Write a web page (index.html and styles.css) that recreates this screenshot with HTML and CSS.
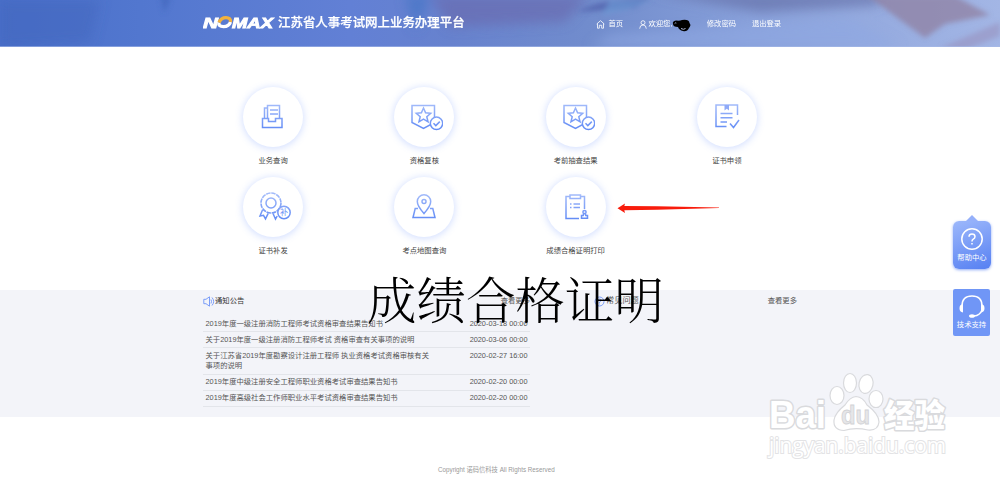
FILE: index.html
```html
<!DOCTYPE html>
<html lang="zh-CN">
<head>
<meta charset="utf-8">
<title>江苏省人事考试网上业务办理平台</title>
<link rel="stylesheet" href="styles.css">
</head>
<body>
<svg class="defs" width="0" height="0"><defs>
<linearGradient id="blue" gradientUnits="userSpaceOnUse" x1="0" y1="2" x2="0" y2="30"><stop offset="0" stop-color="#a3bbfa"/><stop offset="1" stop-color="#5c87f5"/></linearGradient>
<symbol id="badge" viewBox="0 0 34 30"><path d="M3 3.500H25.500V20.500L14.500 26.500L3 20.500Z"/><path d="M14.500 6l2.100 4.800 5.100.5-3.900 3.400 1.200 5.100-4.500-2.700-4.500 2.700 1.200-5.100-3.900-3.400 5.100-.5z"/><circle cx="27.500" cy="21.300" r="6.200" fill="#fff"/><path d="M24.500 21.300l2.300 2.300 4-4"/></symbol>
</defs></svg>
<header class="header">
  <svg class="header-bg" viewBox="0 0 1000 47" preserveAspectRatio="none">
    <defs>
      <linearGradient id="hg"><stop offset="0" stop-color="#496fc9"/><stop offset=".14" stop-color="#5277cf"/><stop offset=".35" stop-color="#6280d5"/><stop offset=".45" stop-color="#6782ce"/><stop offset=".6" stop-color="#728dcd"/><stop offset=".75" stop-color="#88a0da"/><stop offset="1" stop-color="#a3b6e5"/></linearGradient>
      <filter id="soft" x="-20%" y="-50%" width="140%" height="200%"><feGaussianBlur stdDeviation="6"/></filter>
      <filter id="fine" x="-20%" y="-50%" width="140%" height="200%"><feGaussianBlur stdDeviation="2.500"/></filter>
    </defs>
    <rect width="1000" height="47" fill="url(#hg)"/>
    <g filter="url(#soft)"><path d="M0 0H100L90 42 0 47Z" fill="#4066be" opacity=".5"/><path d="M430-5H590L565 22 450 27Z" fill="#686eb2" opacity=".75"/><path d="M405-5h25L416 30z" fill="#4e78c8"/><path d="M650-8H875L880 5 760 12z" fill="#646fa8" opacity=".7"/><path d="M610 35L850 20 900 47H590z" fill="#8fa8e2" opacity=".6"/></g>
    <g filter="url(#fine)"><path d="M160-4h12l-8 17z" fill="#3f65bb" opacity=".6"/><path d="M578 12Q600-2 650-2L635 8z" fill="#5263ac" opacity=".8"/><path d="M610 0h42l-22 9-28 6z" fill="#6c99d4" opacity=".7"/><path d="M868-4H955L990 15 975 18 945 24 925 38Q900 20 868-4z" fill="#8e7d9e" opacity=".7"/><path d="M940 48L1000 22V36L965 50z" fill="#9793bf" opacity=".6"/></g>
    <rect y="46" width="1000" height="1" fill="#a9bbe7" opacity=".6"/>
  </svg>
  <div class="header-inner">
    <div class="logo" aria-label="NOMAX">
      <svg width="72" height="14" viewBox="0 0 72 14"><text x="0" y="12" textLength="15" lengthAdjust="spacingAndGlyphs" class="logo-text">N</text><text x="29" y="12" textLength="41" lengthAdjust="spacingAndGlyphs" class="logo-text">MAX</text><g fill="none" stroke-width="3.300"><path d="M16 6.500Q15 10.600 20.500 10.600Q26 10.600 27.500 6" stroke="#fff"/><path d="M16 6.500Q18 1.700 23 1.700Q28 1.700 27.500 6" stroke="#f2b13c"/></g></svg>
    </div>
    <h1 class="site-title">江苏省人事考试网上业务办理平台</h1>
    <nav class="nav">
      <a class="home"><svg width="9" height="9" viewBox="0 0 9 9"><path d="M.7 4L4.500.7 8.300 4M1.500 3.500V8.200H3.300V5.300H5.700V8.200H7.500V3.500"/></svg>首页</a>
      <a class="user"><svg width="8" height="9" viewBox="0 0 8 9"><circle cx="4" cy="2.700" r="2"/><path d="M.7 8.700Q.8 5 4 5T7.300 8.700"/></svg>欢迎您,<svg class="scribble" width="19" height="13" viewBox="0 0 19 13"><path d="M1 5Q0 2 4 1.500Q8 2 10 1Q17 0 17.500 4L18.500 6Q18 8 17 9Q15 13 11 12Q7 11 6 8Q1 8 1 5Z"/><path class="cut" d="M2.700 4.500q.8-1 1.600-.4M9 9.500q2.500 1.600 4.500 0"/></svg></a>
      <a class="pwd">修改密码</a>
      <a>退出登录</a>
    </nav>
  </div>
</header>

<main class="services">
  <a class="service"><span class="disc"><svg width="34" height="30" viewBox="0 0 34 30"><path d="M8.500 16V3.500H20.500V16M8.500 6H5.500V16M11 8h8M11 12h8" /><path d="M3.500 16.500H9.500V19.500H16.500V16.500H23V25.500H3.500Z"/></svg></span>业务查询</a>
  <a class="service"><span class="disc wide"><svg width="34" height="30"><use href="#badge"/></svg></span>资格复核</a>
  <a class="service"><span class="disc wide"><svg width="34" height="30"><use href="#badge"/></svg></span>考前抽查结果</a>
  <a class="service"><span class="disc"><svg width="34" height="30" viewBox="0 0 34 30"><path d="M13.500 24.500H3V3H24.500V13M7.500 11.500H19.500M7.500 15.700H19.500M7.500 20H14M17 21.500l3.500 4 5.500-7.500"/><path class="solid" d="M11.500 3h4.500v5.500l-2.200-1.700L11.500 8.500z"/></svg></span>证书申领</a>
  <a class="service"><span class="disc wide"><svg width="34" height="30" viewBox="0 0 34 30"><circle cx="13" cy="11" r="10" stroke-width="1.600" stroke-dasharray="4.500 .73"/><circle cx="13" cy="11" r="5"/><path d="M4.500 18L2 24l3.500-.7 2 3.500 2.700-5.500M15 21.500l2.500 5.500 1.700-3"/><circle cx="26" cy="20.500" r="6.200" fill="#fff"/><text class="mini" x="26" y="23.400" text-anchor="middle">补</text></svg></span>证书补发</a>
  <a class="service"><span class="disc"><svg width="34" height="30" viewBox="0 0 34 30"><path d="M14 21.500Q7.300 14 7.300 9.500A6.600 6.600 0 0 1 20.700 9.500Q20.700 14 14 21.500Z"/><circle cx="14" cy="9.500" r="2"/><path d="M8 16.500H5.200L3 25.500H25L22.800 16.500H20"/></svg></span>考点地图查询</a>
  <a class="service"><span class="disc"><svg width="34" height="30" viewBox="0 0 34 30"><path d="M8 4.500H4V26.500H17M18.500 4.500H22.500V17M8 3H18.500V6.500H8zM11.500 12H18M11.500 15.500H18M8 12h1.500M8 15.500h1.500"/><circle cx="22.500" cy="20" r="1.600"/><path d="M21.700 21.500l-.5 2h-1.700v2.700h6v-2.700h-1.700l-.5-2"/></svg></span>成绩合格证明打印</a>
</main>

<section class="info">
  <div class="info-inner">
    <div class="panel notices">
      <div class="panel-head"><svg width="12" height="11" viewBox="0 0 12 11"><path d="M.8 3.300H3L6.500.8V10.200L3 7.700H.8ZM8 3.500Q9 5.500 8 7.500M9 1.500Q12.300 5.500 9 9.500"/></svg><h2>通知公告</h2><a>查看更多</a></div>
      <ul class="list">
        <li><span>2019年度一级注册消防工程师考试资格审查结果告知书</span><time>2020-03-18 00:00</time></li>
        <li><span>关于2019年度一级注册消防工程师考试 资格审查有关事项的说明</span><time>2020-03-06 00:00</time></li>
        <li><span>关于江苏省2019年度勘察设计注册工程师 执业资格考试资格审核有关事项的说明</span><time>2020-02-27 16:00</time></li>
        <li><span>2019年度中级注册安全工程师职业资格考试审查结果告知书</span><time>2020-02-20 00:00</time></li>
        <li><span>2019年度高级社会工作师职业水平考试资格审查结果告知书</span><time>2020-02-20 00:00</time></li>
      </ul>
    </div>
    <div class="panel faq">
      <div class="panel-head"><svg width="11" height="11" viewBox="0 0 11 11"><circle cx="5.500" cy="5.500" r="4.500"/><path d="M4 4.500Q4 3 5.500 3T7 4.500Q7 5.300 5.500 6V6.800M5.500 7.600v.8"/></svg><h2>常见问题</h2><a>查看更多</a></div>
    </div>
  </div>
</section>
<footer class="footer">Copyright 诺码信科技 All Rights Reserved</footer>

<svg class="arrow" width="104" height="12" viewBox="0 0 104 12"><path d="M.5 6.200L8 1.500 7.300 4 40 4.300 102 5.400V6L40 7.800 7.300 8.300 8 11Z"/></svg>
<div class="caption">成绩合格证明</div>

<aside class="side">
  <a class="help"><svg width="24" height="24" viewBox="0 0 24 24"><circle cx="12" cy="12" r="10.200"/><path d="M9 9.700Q9 7 12 7T15 9.700Q15 11.300 13 12.400 12 13 12 14.500M12 16v1.600"/></svg>帮助中心</a>
  <a class="tech"><svg width="28" height="25" viewBox="0 0 28 25"><path d="M4 12Q4 2 14 2T24 12M24 16Q22 21.500 16 22"/><path class="fill" d="M5 10v8.500Q1.500 18 1.500 14.200T5 10zM23 10v8.500q3.500-.5 3.500-4.300T23 10z"/><ellipse class="fill" cx="14" cy="22" rx="3" ry="1.800"/></svg>技术支持</a>
</aside>

<svg class="watermark" width="190" height="95" viewBox="0 0 190 95">
  <g class="wm">
    <text class="bold" x="3" y="58" textLength="57" lengthAdjust="spacingAndGlyphs" font-size="39">Bai</text>
    <ellipse cx="71" cy="25.500" rx="7" ry="9"/><ellipse cx="84" cy="13" rx="6.500" ry="9.500"/><ellipse cx="100" cy="14" rx="7" ry="9.500" transform="rotate(12 100 14)"/><ellipse cx="110" cy="29" rx="7" ry="8.500"/>
    <path d="M90 26.500Q97 27 101 35Q113 44 113 52Q112 61 102 60Q89 57 78 60.500Q67 60 68 50Q69 43 79 35Q84 27 90 26.500Z"/>
    <text class="du" x="75" y="54" textLength="29" lengthAdjust="spacingAndGlyphs" font-size="25">du</text>
    <text class="cn" x="118" y="57" textLength="61" lengthAdjust="spacingAndGlyphs" font-size="32">经验</text>
    <text x="3" y="83" textLength="177" lengthAdjust="spacingAndGlyphs" font-size="21" class="url">jingyan.baidu.com</text>
  </g>
</svg>
</body>
</html>
```

FILE: styles.css
```css
* { box-sizing: border-box; }
body {
  margin: 0;
  position: relative;
  height: 480px;
  overflow: hidden;
  background: #fff;
  color: #555;
  font: 7.33px/10.67px "Liberation Sans", "Noto Sans CJK SC", sans-serif;
}
h1, h2, ul { margin: 0; padding: 0; font-weight: 400; }
ul { list-style: none; }
svg { display: block; flex: none; }
.defs { position: absolute; }

.header { position: relative; height: 47px; overflow: hidden; color: #fff; }
.header-bg { position: absolute; inset: 0; width: 100%; height: 100%; }
.header-inner {
  position: relative;
  width: 594px;
  height: 46px;
  margin-left: 203px;
  display: flex;
  align-items: center;
}
.logo { width: 75px; }
.logo svg { margin-top: -1px; }
.logo-text { font: italic 900 14.5px "Liberation Sans", sans-serif; fill: #fff; stroke: #fff; stroke-width: .9; }
.site-title { width: 318px; font-size: 12.450px; line-height: 18px; font-weight: 500; white-space: nowrap; -webkit-text-stroke: .25px #fff; }
.nav { display: flex; align-items: center; padding-top: 3px; white-space: nowrap; }
.nav a { display: flex; align-items: center; margin-right: 15.8px; }
.nav svg { fill: none; stroke: #fff; stroke-width: .8; }
.nav .home svg { margin-right: 3.5px; }
.nav .user svg { margin-right: 1.5px; }
.nav .user .scribble { margin: 2px 0 0 -.5px; fill: #000; stroke: none; }
.nav .scribble .cut { fill: none; stroke: #aeb9d8; stroke-width: 1; }

.services {
  width: 605px;
  height: 243px;
  margin-left: 197.5px;
  padding-top: 40px;
  display: grid;
  grid-template-columns: repeat(4, 1fr);
  grid-auto-rows: 90px;
}
.service { display: flex; flex-direction: column; align-items: center; color: #444; }
.disc {
  width: 60px;
  height: 60px;
  margin-bottom: 8.6px;
  padding-left: 6px;
  border-radius: 50%;
  background: #fff;
  box-shadow: 0 1px 7px 1px rgba(105, 145, 255, .27);
  display: flex;
  align-items: center;
  justify-content: center;
}
.disc.wide { padding-left: 4px; }
.disc svg { fill: none; stroke: url(#blue); stroke-width: 1.5; }
.disc svg .solid { fill: #8faaf8; stroke: none; }
.disc svg .mini { fill: #6b92f6; stroke: none; font-size: 8px; }

.info { height: 127px; background: #f3f4f9; }
.info-inner { display: flex; width: 594px; margin-left: 203px; }
.notices { width: 327px; }
.faq { width: 203px; margin-left: 64px; }
.panel-head { height: 26px; padding-bottom: 4px; display: flex; align-items: center; }
.panel-head svg { fill: none; stroke: #6e94f7; stroke-width: .9; }
.panel-head h2 { flex: 1; font-size: 7.33px; color: #333; }
.faq .panel-head h2 { font-size: 8.2px; margin-left: 1px; color: #555; }
.list li {
  display: flex;
  justify-content: space-between;
  padding: 2.670px 2.500px;
  box-shadow: inset 0 -1px #e3e5ea;
}
.list span { width: 225px; }

.footer { padding-top: 47.6px; width: 117px; margin-left: 438px; font-size: 6.270px; color: #999; white-space: nowrap; }

.arrow { position: absolute; left: 617px; top: 202px; fill: #f81c0c; }
.caption {
  position: absolute;
  left: 367px;
  top: 268px;
  font: 300 49.500px/60px "Noto Serif CJK SC", "SimSun", "Noto Sans CJK SC", serif;
  color: #000;
  white-space: nowrap;
}

.side { position: absolute; left: 953px; top: 221px; display: flex; flex-direction: column; gap: 20px; color: #fff; }
.side a { position: relative; display: flex; flex-direction: column; align-items: center; white-space: nowrap; }
.side svg { fill: none; stroke: #fff; stroke-width: 1.5; }
.side .fill { fill: #fff; stroke: none; }
.help { width: 38px; height: 48px; padding-top: 6px; border-radius: 6px; background: linear-gradient(160deg, #9db8fb, #5680f2); box-shadow: 0 1px 3px rgba(70, 115, 240, .6); }
.help::before { content: ""; position: absolute; left: 13px; top: -6px; border: 6px solid transparent; border-top: 0; border-bottom-color: #95b0fa; }
.help svg { margin-bottom: 2px; }
.tech { width: 37px; height: 47px; padding-top: 5px; border-radius: 2px; background: #7096f6; }
.tech svg { margin-bottom: 1px; }

.watermark { position: absolute; left: 766px; top: 370px; overflow: visible; }
.wm { fill: #fff; stroke: #d9dadd; stroke-width: 1.2; font-family: "Liberation Sans", sans-serif; }
.wm .bold, .wm .cn { font-weight: 900; stroke: #d9dadd; stroke-width: 3px; paint-order: stroke; stroke-linejoin: round; }
.wm .du { font-weight: 700; fill: #e6e6e8; stroke: #d2d3d6; stroke-width: .8; }
.wm .cn { font-family: "Noto Sans CJK SC", sans-serif; }
.wm .url { stroke-width: 2px; paint-order: stroke; stroke: #e3e3e5; font-family: "Open Sans", sans-serif; }
```
